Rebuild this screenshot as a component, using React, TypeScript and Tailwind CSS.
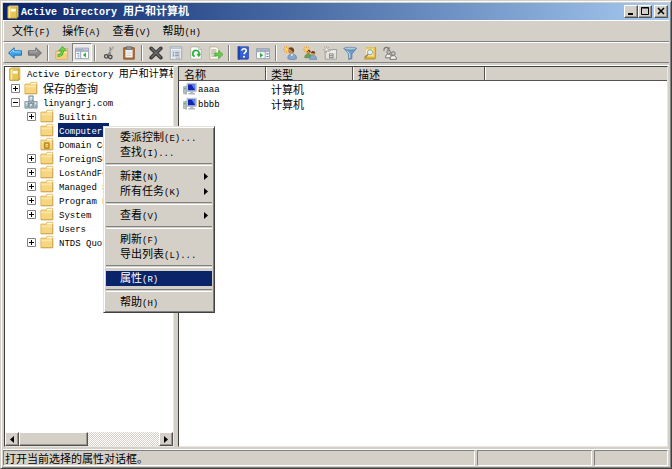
import type { ReactNode } from 'react';

// Latin runs use the narrow mono face, everything else the CJK one
function Label({ text, small }: { text: string; small?: boolean }) {
    const parts = text.split(/([\x20-\x7e]+)/).filter(Boolean);
    return (
        <span className={`whitespace-pre font-['Noto_Sans_CJK_SC',sans-serif] leading-[14px] ${small ? 'text-[10px]' : 'text-[11px]'}`}>
            {parts.map((part, i) =>
                /^[\x20-\x7e]/.test(part) ? (
                    <span key={i} className="font-['Liberation_Mono',monospace] text-[9px]">{part}</span>
                ) : (
                    part
                )
            )}
        </span>
    );
}

/* ---------- Icons ---------- */

function Icon({ children }: { children: ReactNode }) {
    return (
        <svg viewBox="0 0 16 16" className="h-3.5 w-3.5 shrink-0" aria-hidden="true">
            {children}
        </svg>
    );
}

const FolderShape = () => (
    <>
        <path d="M1 3.5h6l1-2h6.5v13H1z" fill="#f6d67f" stroke="#dcb55a" />
        <path d="M8.500 2h5.500v1.800H7.800z" fill="#fffbe6" />
        <path d="M1.700 5.200h12.200v2H1.700z" fill="#fae6a8" />
        <path d="M1 14.600h13.600V4" fill="none" stroke="#c29a44" strokeWidth=".8" />
    </>
);

const Folder = () => <Icon><FolderShape /></Icon>;

const OuFolder = () => (
    <Icon>
        <FolderShape />
        <path d="M5 6.500h5.500v6.500H5z" fill="#d99d22" stroke="#9a741d" strokeWidth=".8" />
        <path d="M6.500 8.500h2.500M6.500 10.500h2.500" stroke="#fff3b8" />
    </Icon>
);

const Book = () => (
    <Icon>
        <path d="M2 2l2-1.500h10V14l-1.500 1.500H2z" fill="#b28a24" />
        <path d="M2 2h10.500v13H2z" fill="#e9c653" stroke="#a8821f" strokeWidth=".7" />
        <path d="M3 2.500h2v12H3z" fill="#fbeaa2" />
        <path d="M5.500 4.500h5.500v3H5.500z" fill="#fffdf0" />
        <path d="M3 1.400h10.500v12" fill="none" stroke="#fff6cf" strokeWidth=".8" />
    </Icon>
);

const Domain = () => (
    <Icon>
        <path d="M8 7v3M3 12v-2h10v2" fill="none" stroke="#4e9a4c" strokeWidth="1.200" />
        <path d="M5.500 1h5v7h-5z" fill="#a9bccb" stroke="#60788c" strokeWidth=".8" />
        <path d="M1 7.500h4V15H1zM11 7.500h4V15h-4zM6 9.500h4V15H6z" fill="#b9c8d4" stroke="#60788c" strokeWidth=".8" />
        <path d="M6.500 2.800h3M6.500 4.600h3M2 9.300h2M12 9.300h2M7 11.300h2" stroke="#fff" />
        <path d="M9 6h1M3 13h1M13 13h1M8 13.400h1" stroke="#32a43a" strokeWidth="1.200" />
    </Icon>
);

const Computer = () => (
    <Icon>
        <path d="M.5 5.500l3.500-1v9.500l-3.500-.8z" fill="#b4bcc1" stroke="#8b949a" strokeWidth=".6" />
        <path d="M1.400 7.500h1.600" stroke="#4bb04b" strokeWidth="1.500" />
        <path d="M4.500 1.500h10.700v9.300H4.500z" fill="#cdd3da" stroke="#9aa3ae" strokeWidth=".7" />
        <path d="M5.700 2.700h8.200v6.800H5.700z" fill="#1226b4" />
        <path d="M9.500 2.700h4.400v6.800z" fill="#5d83ee" />
        <path d="M8.300 11h3.400v1.700h2v1.500H6.200v-1.500h2.100z" fill="#aeb6bd" />
    </Icon>
);

const Back = () => (
    <Icon>
        <path d="M.6 8l6.400-6v3.500h8.400v5H7V14z" fill="#3aa7ea" stroke="#1b66b4" strokeLinejoin="round" />
        <path d="M2.500 7.700l3.700-3.400v2.400H14.500" fill="none" stroke="#a6e0ff" />
    </Icon>
);

const Forward = () => (
    <Icon>
        <path d="M15.400 8L9 2v3.500H.6v5H9V14z" fill="#8b8b8b" stroke="#626262" strokeLinejoin="round" />
        <path d="M1.600 6.700h8.200V4.300" fill="none" stroke="#bcbcbc" />
    </Icon>
);

const FolderUp = () => (
    <Icon>
        <path d="M1 6h5l1-3h7.500v12H1z" fill="#f8e2a0" stroke="#cba85a" />
        <path d="M1.600 8.500h12.300v6H1.600z" fill="#f3cf7a" />
        <path d="M3 11c3.500 0 5.500-1.500 5.500-5.500" fill="none" stroke="#3a9a2c" strokeWidth="3.200" />
        <path d="M4.200 5.500l4.300-5 4.500 5z" fill="#6fd347" stroke="#3a9a2c" strokeWidth=".8" />
        <path d="M3 11c3.500 0 5.500-1.500 5.500-6" fill="none" stroke="#6fd347" strokeWidth="1.800" />
    </Icon>
);

const TreePane = () => (
    <Icon>
        <path d="M.5 2.500h15v12H.5z" fill="#fdfdfd" stroke="#8b99ab" />
        <path d="M1 3h14v2.500H1z" fill="#9fb0c6" />
        <path d="M10.500 4.200h1.200M13 4.200h1.200" stroke="#fff" />
        <path d="M6.500 5.500v9M1 6h14" stroke="#8b99ab" />
        <path d="M2 8.500h3M3 10.500h2M3 12.500h2" stroke="#5a8cc4" />
        <path d="M12.500 7.500v5.500L9 10.200z" fill="#35a835" />
    </Icon>
);

const Scissors = () => (
    <Icon>
        <path d="M13.500.8L6.500 10.500M9.500 1.500L9.300 9.800" fill="none" stroke="#8a8a8a" strokeWidth="1.700" />
        <path d="M13.600 1L9.500 7" stroke="#e2e2e2" strokeWidth=".8" />
        <circle cx="4.800" cy="11.800" r="2" fill="none" stroke="#4c4c4c" strokeWidth="1.500" />
        <circle cx="9.500" cy="12.600" r="2" fill="none" stroke="#4c4c4c" strokeWidth="1.500" />
    </Icon>
);

const Clipboard = () => (
    <Icon>
        <path d="M2 2h12v13H2z" fill="#b5753a" stroke="#7d4c20" />
        <path d="M4 4h8v9H4z" fill="#fff" />
        <path d="M5 7h6M5 9h6M5 11h6" stroke="#c3c8ce" />
        <path d="M5 .8h6v3.400H5z" fill="#8f959b" stroke="#55595d" strokeWidth=".7" />
    </Icon>
);

const Delete = () => (
    <Icon>
        <path d="M2.500 2.700l11 10.600M13.500 2.700L2.500 13.300" stroke="#3c3c3c" strokeWidth="4.200" strokeLinecap="round" />
        <path d="M2.600 2.600l10.800 10.600M13.200 2.800L2.800 13" stroke="#6c6c6c" strokeWidth="1.600" />
    </Icon>
);

const Properties = () => (
    <Icon>
        <path d="M1.500 1h13v14h-13z" fill="#fff" stroke="#93a0b0" />
        <path d="M2 1.500h12v2.200H2z" fill="#b8c5d4" />
        <path d="M3.500 5.500h9v7h-9z" fill="#edf2f7" stroke="#a7b2bf" strokeWidth=".8" />
        <path d="M4.700 7.300h1.300M4.700 9.200h1.300M4.700 11h1.300" stroke="#2f69b8" />
        <path d="M7 7.300h4.500M7 9.200h4.500M7 11h4.500" stroke="#7d8894" />
        <path d="M8 13.800h5" stroke="#93a0b0" />
    </Icon>
);

const Refresh = () => (
    <Icon>
        <path d="M2 1h9l3 3v11H2z" fill="#fff" stroke="#a9ada4" />
        <path d="M11 1v3h3" fill="#e3e3dc" stroke="#a9ada4" strokeWidth=".8" />
        <path d="M6.500 12a3.600 3.600 0 1 1 5-3" fill="none" stroke="#2eb03c" strokeWidth="2" />
        <path d="M8.300 8.800h5.500l-2.500 4z" fill="#2eb03c" />
    </Icon>
);

const Export = () => (
    <Icon>
        <path d="M1 1h8l2.500 3v11H1z" fill="#fdfcec" stroke="#b3af98" />
        <path d="M2.500 4.500h6M2.500 6.800h6M2.500 9h4M2.500 11.500h6" stroke="#8d8b7a" />
        <path d="M6.500 8h4.500V5l5 4.700-5 4.700v-3H6.500z" fill="#6acb48" stroke="#3c9a2f" strokeWidth=".7" />
    </Icon>
);

const Help = () => (
    <Icon>
        <path d="M2 .5h12.500v14l-1 1H2z" fill="#172f91" />
        <path d="M4.500 1h9.500v13.500H4.500z" fill="#3560d4" />
        <path d="M2 .5h2.500v15H2z" fill="#26459f" />
        <path d="M6.700 5.500c0-3.200 5-3 5-.2 0 1.900-2.500 2-2.500 4.200" fill="none" stroke="#fff" strokeWidth="1.800" />
        <circle cx="9.200" cy="12.200" r="1.200" fill="#fff" />
    </Icon>
);

const ActionPane = () => (
    <Icon>
        <path d="M.5 3h15v11.500H.5z" fill="#fdfdfd" stroke="#8b99ab" />
        <path d="M1 3.500h14V6H1z" fill="#9fb0c6" />
        <path d="M10.500 6v8.500M1 6.500h14" stroke="#8b99ab" />
        <path d="M4.500 7.700v5.600L8.200 10.500z" fill="#35a835" />
        <path d="M12 9h2.300M12 12h2.300" stroke="#3d7cc6" strokeWidth="1.300" />
    </Icon>
);

const Spark = () => (
    <>
        <path d="M4 0v8M0 4h8M1.200 1.200l5.600 5.600M6.800 1.200L1.200 6.800" stroke="#f3a02f" />
        <circle cx="4" cy="4" r="1.700" fill="#ffdd62" />
    </>
);

const NewUser = () => (
    <Icon>
        <path d="M5.500 14.500c0-3.700 1.500-5.500 4.800-5.500s5.200 1.800 5.200 5.500c-2 1.300-8 1.300-10 0z" fill="#86a9cd" stroke="#56779b" strokeWidth=".7" />
        <path d="M8.700 9.300l1.500 2.500 1.500-2.500z" fill="#fff" />
        <circle cx="9.200" cy="5.500" r="3.400" fill="#c78a50" />
        <path d="M6.200 4C6.500.3 12.800.2 12.800 5.500L11.300 8C11.300 5 9 4.200 6.200 4z" fill="#6b431f" />
        <Spark />
    </Icon>
);

const NewGroup = () => (
    <Icon>
        <path d="M2 13.500c0-3 1.200-4.300 4-4.300s3.800 1.300 3.800 4.300z" fill="#62a552" stroke="#3f7a35" strokeWidth=".6" />
        <circle cx="6.300" cy="7" r="2.300" fill="#c78a50" />
        <path d="M4.300 6c.5-2.700 4.500-2.200 4.400 1z" fill="#6b431f" />
        <path d="M7.500 15.300c0-3.200 1.300-4.600 4-4.600s4.100 1.400 4.100 4.600z" fill="#86a9cd" stroke="#56779b" strokeWidth=".6" />
        <circle cx="11.500" cy="8.500" r="2.400" fill="#d49b62" />
        <path d="M9.200 8c.3-3.200 4.900-2.900 4.800.6z" fill="#6b431f" />
        <Spark />
    </Icon>
);

const NewOu = () => (
    <Icon>
        <path d="M2.500 6h5.500l1-2h6.500v11h-13z" fill="#e2e2de" stroke="#999995" />
        <path d="M3.500 7h11" stroke="#fafafa" />
        <path d="M7 8.500h5v5.500H7z" fill="#80807c" />
        <path d="M8 10h3M8 12.200h3" stroke="#f4f4f0" />
        <path d="M4 0v8M0 4h8M1.200 1.200l5.600 5.600M6.800 1.200L1.200 6.800" stroke="#a3a39f" strokeWidth=".9" />
        <circle cx="4" cy="4" r="1.500" fill="#f0f0ec" />
    </Icon>
);

const Funnel = () => (
    <Icon>
        <path d="M1 2.500h14.500L10.200 9v5.500l-3.700.8V9z" fill="#6d9cc4" stroke="#4a7398" strokeWidth=".8" />
        <ellipse cx="8.200" cy="3" rx="7" ry="1.600" fill="#a9cbe4" stroke="#4a7398" strokeWidth=".6" />
        <path d="M4.500 5.500L7.700 9v5" fill="none" stroke="#d6eafa" />
    </Icon>
);

const Find = () => (
    <Icon>
        <path d="M4 1h11v13l-1.500 1.500H1.500v-3L4 10z" fill="#c29d38" />
        <path d="M4 1.500h9.500V13H2.500v-1.500L4 10z" fill="#f0cf55" />
        <path d="M3.500 4h8v7h-8z" fill="#fff7cf" />
        <circle cx="8" cy="7.200" r="3" fill="#e2f0ee" stroke="#8b9a92" />
        <path d="M5.800 9.500l-3.500 3.500" stroke="#8b8468" strokeWidth="1.600" />
    </Icon>
);

const AddToGroup = () => (
    <Icon>
        <path d="M3 13.500c0-3 1-4.300 3.300-4.300s3.300 1.300 3.300 4.300z" fill="#eeeeea" stroke="#6b6b68" />
        <circle cx="6.500" cy="7" r="2.100" fill="#c4c4c0" stroke="#6b6b68" />
        <path d="M8 15.300c0-3 1-4.300 3.600-4.300s3.700 1.300 3.700 4.300z" fill="#eeeeea" stroke="#6b6b68" />
        <circle cx="11.700" cy="8.600" r="2.200" fill="#c4c4c0" stroke="#6b6b68" />
        <path d="M1.200 5.500C.5 1.500 4 .8 6 2.500" fill="none" stroke="#777773" strokeWidth="1.300" />
        <path d="M7.600.5v4l-3.500-.8z" fill="#777773" />
    </Icon>
);

/* ---------- Data ---------- */

const toolGroups = [
    [
        { name: '后退', icon: <Back /> },
        { name: '前进', icon: <Forward /> },
    ],
    [
        { name: '上一级', icon: <FolderUp /> },
        { name: '显示控制台树', icon: <TreePane />, pressed: true },
    ],
    [
        { name: '剪切', icon: <Scissors /> },
        { name: '粘贴', icon: <Clipboard /> },
    ],
    [
        { name: '删除', icon: <Delete /> },
        { name: '属性', icon: <Properties /> },
        { name: '刷新', icon: <Refresh /> },
        { name: '导出列表', icon: <Export /> },
    ],
    [
        { name: '帮助', icon: <Help /> },
        { name: '显示操作窗格', icon: <ActionPane /> },
    ],
    [
        { name: '新建用户', icon: <NewUser /> },
        { name: '新建组', icon: <NewGroup /> },
        { name: '新建组织单位', icon: <NewOu /> },
        { name: '筛选器', icon: <Funnel /> },
        { name: '查找', icon: <Find /> },
        { name: '添加到组', icon: <AddToGroup /> },
    ],
];

interface TreeNode {
    text: string;
    level: number;
    icon: ReactNode;
    mark?: '+' | '-';
    selected?: boolean;
}

const tree: TreeNode[] = [
    { text: 'Active Directory 用户和计算机', level: 0, icon: <Book /> },
    { text: '保存的查询', level: 1, icon: <Folder />, mark: '+' },
    { text: 'linyangrj.com', level: 1, icon: <Domain />, mark: '-' },
    { text: 'Builtin', level: 2, icon: <Folder />, mark: '+' },
    { text: 'Computers', level: 2, icon: <Folder />, selected: true },
    { text: 'Domain Co', level: 2, icon: <OuFolder /> },
    { text: 'ForeignSe', level: 2, icon: <Folder />, mark: '+' },
    { text: 'LostAndFo', level: 2, icon: <Folder />, mark: '+' },
    { text: 'Managed S', level: 2, icon: <Folder />, mark: '+' },
    { text: 'Program D', level: 2, icon: <Folder />, mark: '+' },
    { text: 'System', level: 2, icon: <Folder />, mark: '+' },
    { text: 'Users', level: 2, icon: <Folder /> },
    { text: 'NTDS Quot', level: 2, icon: <Folder />, mark: '+' },
];

const indents = ['pl-[3px]', 'pl-1.5', 'pl-[22px]'];

const contextMenu = [
    [{ text: '委派控制(E)...' }, { text: '查找(I)...' }],
    [{ text: '新建(N)', sub: true }, { text: '所有任务(K)', sub: true }],
    [{ text: '查看(V)', sub: true }],
    [{ text: '刷新(F)' }, { text: '导出列表(L)...' }],
    [{ text: '属性(R)', active: true }],
    [{ text: '帮助(H)' }],
];

const computers = ['aaaa', 'bbbb'];

/* ---------- Parts ---------- */

const raised = 'border border-t-white border-l-white border-r-[#55534f] border-b-[#55534f] bg-[#d4d0c8] shadow-[inset_-1px_-1px_0_#99968f]';

function Expander({ mark }: { mark?: '+' | '-' }) {
    if (!mark) return <span className="w-[9px] shrink-0" />;
    return (
        <svg viewBox="0 0 9 9" className="h-[9px] w-[9px] shrink-0" aria-hidden="true">
            <path d="M.5.5h8v8h-8z" fill="#fff" stroke="#848484" />
            <path d={mark === '+' ? 'M2 4.5h5M4.5 2v5' : 'M2 4.5h5'} stroke="#000" />
        </svg>
    );
}

function TitleBar() {
    return (
        <header className="flex h-[17px] shrink-0 items-center bg-linear-to-r from-[#0a246a] to-[#a6caf0] pr-px pl-[3px]">
            <Book />
            <h1 className="ml-px flex-1 whitespace-pre font-['Liberation_Mono',monospace] text-[10px] leading-4 font-bold text-white">
                Active Directory <span className="font-['Noto_Sans_CJK_SC',sans-serif] text-[11px]">用户和计算机</span>
            </h1>
            <button aria-label="最小化" className={`h-[13px] w-3.5 ${raised}`}>
                <svg viewBox="0 0 12 11" className="h-full w-full"><path d="M3 8h5" stroke="#000" strokeWidth="2" /></svg>
            </button>
            <button aria-label="最大化" className={`h-[13px] w-3.5 ${raised}`}>
                <svg viewBox="0 0 12 11" className="h-full w-full"><path d="M2.500 1.500h7v7h-7zM2 2h8" fill="none" stroke="#000" /></svg>
            </button>
            <button aria-label="关闭" className={`ml-0.5 h-[13px] w-3.5 ${raised}`}>
                <svg viewBox="0 0 12 11" className="h-full w-full"><path d="M3 2l6 6M9 2L3 8" stroke="#000" strokeWidth="1.500" /></svg>
            </button>
        </header>
    );
}

function ContextMenu() {
    return (
        <div role="menu" className="absolute top-[125px] left-[102px] w-28 border border-t-[#e4e1da] border-l-[#e4e1da] border-r-[#404040] border-b-[#404040] bg-[#d4d0c8] px-0.5 pt-[3px] pb-0.5 shadow-[inset_1px_1px_0_#fff,inset_-1px_-1px_0_#808080]">
            {contextMenu.map((group, i) => (
                <div key={i}>
                    {i > 0 && <div className="my-[3px] h-[3px] border-t border-b border-t-[#808080] border-b-white bg-[#d4d0c8]" />}
                    {group.map((item) => (
                        <button
                            key={item.text}
                            role="menuitem"
                            className={`flex h-[15px] w-full items-center pr-1 pl-3.5 ${'active' in item ? 'bg-[#0a246a] text-white' : 'text-black'}`}
                        >
                            <Label text={item.text} />
                            {'sub' in item && (
                                <svg viewBox="0 0 4 7" className="ml-auto h-[7px] w-1" aria-hidden="true"><path d="M0 0l4 3.500L0 7z" /></svg>
                            )}
                        </button>
                    ))}
                </div>
            ))}
        </div>
    );
}

export default function App() {
    return (
        <div className="relative flex h-screen flex-col overflow-hidden border border-t-[#d4d0c8] border-l-[#d4d0c8] border-r-[#404040] border-b-[#404040] bg-[#d4d0c8] p-0.5 text-black shadow-[inset_1px_1px_0_#fff,inset_-1px_-1px_0_#808080]">
            <TitleBar />

            {/* Menu bar */}
            <nav className="flex h-[22px] shrink-0 items-center border-t border-b border-l border-t-white border-b-[#808080] border-l-white pl-0.5">
                {['文件(F)', '操作(A)', '查看(V)', '帮助(H)'].map((item) => (
                    <button key={item} className="flex px-1.5"><Label text={item} /></button>
                ))}
            </nav>

            {/* Toolbar */}
            <div role="toolbar" className="flex h-[21px] shrink-0 items-center border-t border-b border-l border-t-white border-b-[#808080] border-l-white pl-px">
                {toolGroups.map((group, i) => (
                    <div key={i} className="flex items-center">
                        {i > 0 && <span className="mr-[3px] ml-0.5 h-4 w-0.5 border-r border-l border-r-white border-l-[#808080]" />}
                        {group.map((tool) => (
                            <button
                                key={tool.name}
                                aria-label={tool.name}
                                className={`flex h-[19px] w-5 items-center justify-center ${'pressed' in tool ? 'border border-t-[#808080] border-r-white border-b-white border-l-[#808080] bg-[#edebe7]' : ''}`}
                            >
                                {tool.icon}
                            </button>
                        ))}
                    </div>
                ))}
            </div>

            {/* Panes */}
            <main className="mt-0.5 flex min-h-0 flex-1 gap-1 border-t border-t-white pr-px pl-px">
                <aside className="flex w-[170px] shrink-0 flex-col border border-t-[#404040] border-r-[#e8e6e0] border-b-[#e8e6e0] border-l-[#404040] bg-white">
                    <ul className="min-h-0 flex-1 overflow-hidden">
                        {tree.map((node) => (
                            <li key={node.text}>
                                <button className={`flex h-3.5 w-full items-center gap-1 overflow-hidden ${indents[node.level]}`}>
                                    {node.level > 0 && <Expander mark={node.mark} />}
                                    {node.icon}
                                    <span className={`flex h-3.5 items-center px-px ${node.selected ? 'bg-[#0a246a] text-white' : ''}`}>
                                        <Label text={node.text} small={node.level === 0} />
                                    </span>
                                </button>
                            </li>
                        ))}
                    </ul>
                    <div className="flex h-3.5 shrink-0 bg-[repeating-conic-gradient(#fff_0_25%,#d4d0c8_0_50%)] bg-size-[2px_2px]">
                        <button aria-label="向左滚动" className={`flex w-3.5 items-center justify-center ${raised}`}>
                            <svg viewBox="0 0 4 7" className="h-[7px] w-1"><path d="M4 0L0 3.500 4 7z" /></svg>
                        </button>
                        <div className={`w-[69px] ${raised}`} />
                        <button aria-label="向右滚动" className={`ml-auto flex w-3.5 items-center justify-center ${raised}`}>
                            <svg viewBox="0 0 4 7" className="h-[7px] w-1"><path d="M0 0l4 3.500L0 7z" /></svg>
                        </button>
                    </div>
                </aside>

                <section className="min-w-0 flex-1 border border-t-[#404040] border-r-[#e8e6e0] border-b-[#e8e6e0] border-l-[#404040] bg-white">
                    <table className="w-full table-fixed border-separate border-spacing-0 text-left">
                        <thead>
                            <tr className="bg-[#d4d0c8]">
                                <th className="h-3.5 w-[87px] border-r border-b border-[#55534f] p-0 pl-[5px] leading-3 font-normal"><span className="flex h-3 items-center"><Label text="名称" /></span></th>
                                <th className="w-[87px] border-r border-b border-[#55534f] p-0 pl-[5px] leading-3 font-normal shadow-[inset_1px_0_0_#fff]"><span className="flex h-3 items-center"><Label text="类型" /></span></th>
                                <th className="w-[132px] border-r border-b border-[#55534f] p-0 pl-[5px] leading-3 font-normal shadow-[inset_1px_0_0_#fff]"><span className="flex h-3 items-center"><Label text="描述" /></span></th>
                                <td className="border-b border-[#55534f] p-0 shadow-[inset_1px_0_0_#fff]" />
                            </tr>
                        </thead>
                        <tbody>
                            {computers.map((name) => (
                                <tr key={name}>
                                    <td className="h-[15px] p-0 pl-1">
                                        <span className="flex h-[15px] items-center gap-px"><Computer /><Label text={name} /></span>
                                    </td>
                                    <td className="p-0 pl-[5px]"><span className="flex h-[15px] items-center"><Label text="计算机" /></span></td>
                                    <td />
                                    <td />
                                </tr>
                            ))}
                        </tbody>
                    </table>
                </section>
            </main>

            {/* Status bar */}
            <footer className="mt-0.5 flex h-[17px] shrink-0 gap-0.5 border-t border-t-white pr-px">
                <div className="flex flex-1 items-center border border-t-[#808080] border-r-white border-b-white border-l-[#808080] pl-px">
                    <Label text="打开当前选择的属性对话框。" />
                </div>
                <div className="w-[115px] border border-t-[#808080] border-r-white border-b-white border-l-[#808080]" />
                <div className="w-[74px] border border-t-[#808080] border-r-white border-b-white border-l-[#808080]" />
            </footer>

            <ContextMenu />
        </div>
    );
}
